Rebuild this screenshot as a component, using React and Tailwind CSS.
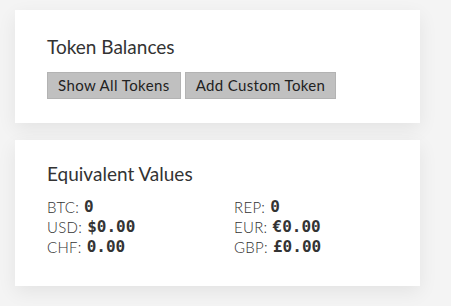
export default function App() {
  const rows = [
    ["BTC:", "0", "REP:", "0"],
    ["USD:", "$0.00", "EUR:", "€0.00"],
    ["CHF:", "0.00", "GBP:", "£0.00"],
  ];
  const mono = { fontFamily: "'DejaVu Sans Mono', monospace" };
  return (
    <div className="w-[451px] h-[306px] bg-[#f4f4f4] pt-[10px] pl-[15px] flex flex-col gap-[17px]" style={{ fontFamily: "Lato, 'Noto Sans', sans-serif" }}>
      <div className="w-[405px] h-[113px] bg-white shadow-[0_6px_18px_rgba(0,0,0,0.07)] pl-[32px] pt-[25px]">
        <div className="text-[19px] leading-[24px] text-[#333]">Token Balances</div>
        <div className="flex gap-[4px] mt-[13px]">
          <button className="h-[27px] px-[10px] bg-[#c0c0c0] border border-[#b3b3b3] text-[15px] text-[#222] tracking-[0.4px]">Show All Tokens</button>
          <button className="h-[27px] px-[10px] bg-[#c0c0c0] border border-[#b3b3b3] text-[15px] text-[#222] tracking-[0.35px]">Add Custom Token</button>
        </div>
      </div>
      <div className="w-[405px] h-[146px] bg-white shadow-[0_6px_18px_rgba(0,0,0,0.07)] pl-[32px] pt-[22px]">
        <div className="text-[19px] leading-[24px] text-[#333]">Equivalent Values</div>
        <div className="mt-[11px] grid grid-cols-[187px_1fr]">
          {rows.map((r, i) => [
            <div key={"a" + i} className="h-[20px] flex items-center text-[15px] text-[#333]">
              <span className="font-light tracking-[0.3px]">{r[0]}</span>
              <span className="ml-[5px] font-bold text-[16px]" style={mono}>{r[1]}</span>
            </div>,
            <div key={"b" + i} className="h-[20px] flex items-center text-[15px] text-[#333]">
              <span className="font-light tracking-[0.3px]">{r[2]}</span>
              <span className="ml-[5px] font-bold text-[16px]" style={mono}>{r[3]}</span>
            </div>,
          ])}
        </div>
      </div>
    </div>
  );
}
